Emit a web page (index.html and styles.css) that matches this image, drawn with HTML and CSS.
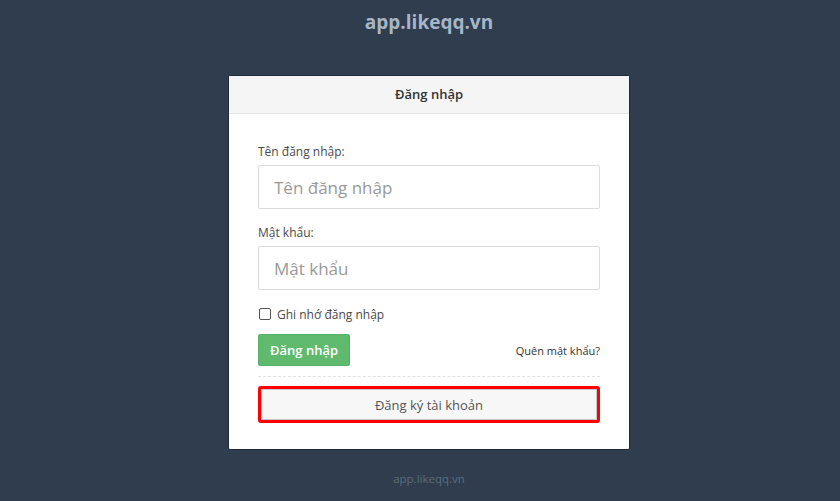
FILE: index.html
```html
<!DOCTYPE html>
<html lang="vi">
<head>
<meta charset="utf-8">
<title>app.likeqq.vn</title>
<link rel="stylesheet" href="styles.css">
</head>
<body>
<div class="page">
  <h1 class="brand">app.likeqq.vn</h1>
  <div class="card">
    <div class="card-header">Đăng nhập</div>
    <div class="card-body">
      <div class="group">
        <label class="label">Tên đăng nhập:</label>
        <input class="input" type="text" placeholder="Tên đăng nhập">
      </div>
      <div class="group">
        <label class="label">Mật khẩu:</label>
        <input class="input" type="password" placeholder="Mật khẩu">
      </div>
      <label class="remember"><span class="check"></span>Ghi nhớ đăng nhập</label>
      <div class="actions">
        <button class="btn-login">Đăng nhập</button>
        <a class="forgot">Quên mật khẩu?</a>
      </div>
      <div class="divider"></div>
      <div class="highlight">
        <button class="btn-register">Đăng ký tài khoản</button>
      </div>
    </div>
  </div>
  <div class="footer">app.likeqq.vn</div>
</div>
</body>
</html>
```
FILE: styles.css
```css
html, body {
  margin: 0;
  padding: 0;
  background: #2f3d4e;
  font-family: "Open Sans", "Noto Sans", sans-serif;
}
.page {
  padding-left: 18px;
  display: flex;
  flex-direction: column;
  align-items: center;
}
.brand {
  margin: 8px 0 0;
  height: 28px;
  line-height: 28px;
  font-size: 19px;
  font-weight: 700;
  color: #a7b6c7;
}
.card {
  margin-top: 39px;
  width: 400px;
  background: #fff;
  border: 1px solid #1f2a36;
  border-radius: 2px;
}
.card-header {
  height: 37px;
  line-height: 37px;
  background: #f5f5f5;
  border-bottom: 1px solid #e6e6e6;
  text-align: center;
  font-size: 13px;
  font-weight: 600;
  color: #333;
}
.card-body {
  padding: 29px 29px 26px;
}
.group {
  margin-bottom: 15px;
}
.label {
  display: block;
  font-size: 12px;
  line-height: 18px;
  color: #4a4a4a;
  margin-bottom: 4px;
}
.input {
  display: block;
  box-sizing: border-box;
  width: 100%;
  height: 44px;
  padding: 0 15px;
  border: 1px solid #dcdcdc;
  border-radius: 2px;
  font-family: inherit;
  font-size: 17px;
  color: #555;
  outline: none;
}
.input::placeholder {
  color: #999;
}
.remember {
  display: flex;
  align-items: center;
  height: 18px;
  font-size: 12px;
  color: #4a4a4a;
}
.check {
  width: 10px;
  height: 10px;
  border: 1px solid #555;
  border-radius: 2px;
  margin: 0 6px 0 1px;
}
.actions {
  margin-top: 11px;
  display: flex;
  justify-content: space-between;
  align-items: center;
}
.btn-login {
  height: 32px;
  width: 92px;
  background: #5fba6e;
  border: 1px solid #56b065;
  border-radius: 2px;
  color: #fff;
  font-family: inherit;
  font-size: 13px;
  font-weight: 600;
  padding: 0;
}
.forgot {
  font-size: 11px;
  color: #333;
}
.divider {
  margin-top: 10px;
  border-top: 1px dashed #e2e2e2;
}
.highlight {
  margin-top: 9px;
  border: 3px solid #f00;
  border-radius: 3px;
}
.btn-register {
  display: block;
  box-sizing: border-box;
  width: 100%;
  height: 31px;
  background: #f7f7f7;
  border: 1px solid #c8c8c8;
  color: #555;
  font-family: inherit;
  font-size: 13px;
  padding: 0;
}
.footer {
  margin-top: 21px;
  font-size: 11.5px;
  line-height: 16px;
  color: #5d6c7d;
}
```
